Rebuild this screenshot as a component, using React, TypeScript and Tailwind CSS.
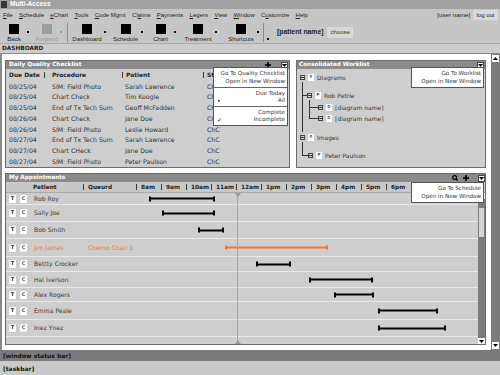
import React from "react";

const dv = "font-['DejaVu_Sans',Verdana,sans-serif]";
const lib = "font-['Liberation_Sans',Arial,sans-serif]";

const menu = [
  ["", "F", "ile"],
  ["", "S", "chedule"],
  ["", "e", "Chart"],
  ["", "T", "ools"],
  ["", "C", "ode Mgmt"],
  ["Cl", "a", "ims"],
  ["", "P", "ayments"],
  ["", "L", "egers"],
  ["", "V", "iew"],
  ["", "W", "indow"],
  ["C", "u", "stomize"],
  ["", "H", "elp"],
];

const checklist = [
  ["08/25/04", "SIM: Field Photo", "Sarah Lawrence"],
  ["08/25/04", "Chart Check", "Tim Koogle"],
  ["08/25/04", "End of Tx Tech Sum", "Geoff McFadden"],
  ["08/26/04", "Chart Check", "Jane Doe"],
  ["08/26/04", "SIM: Field Photo", "Leslie Howard"],
  ["08/27/04", "End of Tx Tech Sum", "Sarah Lawrence"],
  ["08/27/04", "Chart CHeck", "Jane Doe"],
  ["08/27/04", "SIM: Field Photo", "Peter Paulson"],
];

const appts = [
  { name: "Rob Roy", h: "h-[12px]", left: 143, width: 66 },
  { name: "Sally Joe", h: "h-[17px]", left: 156, width: 53 },
  { name: "Bob Smith", h: "h-[17px]", left: 192, width: 26 },
  { name: "Jim James", queued: "Chemo Chair 1", h: "h-[18px]", left: 219, width: 103, active: true },
  { name: "Bettty Crocker", h: "h-[15px]", left: 250, width: 35 },
  { name: "Hal Iverson", h: "h-[16px]", left: 303, width: 64 },
  { name: "Alex Rogers", h: "h-[14px]", left: 328, width: 40 },
  { name: "Emma Peale", h: "h-[18px]", left: 372, width: 60 },
  { name: "Inez Ynez", h: "h-[17px]", left: 372, width: 68 },
];

const hours = ["8am", "9am", "10am", "11am", "12am", "1pm", "2pm", "3pm", "4pm", "5pm", "6pm"];

function Caret({ up = false, className = "" }: { up?: boolean; className?: string }) {
  return (
    <svg width="5" height="3" viewBox="0 0 5 3" className={className}>
      <path d={up ? "M0 3 L2.5 0 L5 3 Z" : "M0 0 L5 0 L2.5 3 Z"} fill="#000" />
    </svg>
  );
}

function MenuButton() {
  return (
    <span className="flex h-[7px] w-[7px] items-center justify-center border border-[#444] bg-white">
      <Caret />
    </span>
  );
}

function Plus() {
  return (
    <svg width="6" height="6" viewBox="0 0 6 6">
      <rect x="2.2" y="0" width="1.6" height="6" fill="#000" />
      <rect x="0" y="2.2" width="6" height="1.6" fill="#000" />
    </svg>
  );
}

function Search() {
  return (
    <svg width="6" height="6" viewBox="0 0 6 6">
      <circle cx="2.6" cy="2.6" r="1.9" stroke="#000" strokeWidth="1.2" fill="none" />
      <path d="M3.8 3.8 L5.7 5.7" stroke="#000" strokeWidth="1.3" />
    </svg>
  );
}

function Pipe() {
  return <span className="h-[6px] w-px shrink-0 bg-[#3a3a3a]" />;
}

function ToolButton({ label, className, gray = false }: { label: string; className: string; gray?: boolean }) {
  return (
    <div className={`relative flex shrink-0 flex-col items-center ${className}`}>
      <span className={`h-[10px] w-[10px] ${gray ? "bg-[#9c9c9c]" : "bg-black"}`} />
      <span className={`mt-[2px] whitespace-nowrap leading-[6px] ${gray ? "text-[#9a9a9a]" : "text-[#222]"}`}>{label}</span>
      <span className={`absolute -right-[4px] top-[7px] h-[2px] w-[2px] ${gray ? "bg-[#9a9a9a]" : "bg-[#111]"}`} />
    </div>
  );
}

function Dropdown({ className, sections }: { className: string; sections: { mark?: string; text: string }[][] }) {
  return (
    <div className={`absolute z-10 border border-[#555] bg-white text-[5.6px] text-[#333] ${className}`}>
      {sections.map((s, i) => (
        <div key={i} className={`${i > 0 ? "border-t border-[#666] pt-[2px]" : "pt-[1px]"} pb-[2px]`}>
          {s.map((it) => (
            <div key={it.text} className={`flex items-center justify-between pl-[3px] pr-[2px] ${i === 0 ? "h-[8px]" : "h-[7px]"}`}>
              {it.mark ? <span className="text-[6px] leading-none text-black">{it.mark}</span> : <span />}
              <span className="whitespace-nowrap">{it.text}</span>
            </div>
          ))}
        </div>
      ))}
    </div>
  );
}

function Expander() {
  return (
    <span className="relative h-[5px] w-[5px] shrink-0 border border-[#444] bg-[#d4d4d4]">
      <span className="absolute left-0 right-0 top-[1px] h-px bg-[#333]" />
    </span>
  );
}

function TreeRow({ tag, text, className }: { tag: string; text: string; className: string }) {
  return (
    <div className={`flex h-[10px] items-center gap-[3px] ${className}`}>
      <Expander />
      <span className="flex h-[7px] w-[6px] items-center justify-center bg-white text-[4px] font-bold text-[#555]">{tag}</span>
      <span className="whitespace-nowrap text-[6px] text-[#333]">{text}</span>
    </div>
  );
}

function Checklist() {
  return (
    <section className="relative flex w-[285px] shrink-0 flex-col border border-[#6c6c6c] bg-[#cecece]">
      <div className="flex h-[8px] shrink-0 items-center bg-[#8b8b8b] pl-[3px]">
        <span className="text-[5.7px] font-bold leading-none text-white">Daily Quality Checklist</span>
        <span className="ml-auto mr-[10px]"><Plus /></span>
        <span className="mr-[1px]"><MenuButton /></span>
      </div>
      <div className="flex h-[12px] shrink-0 items-center text-[5.9px] font-bold text-[#222]">
        <span className="w-[38px] pl-[3px]">Due Date</span>
        <span className="flex w-[78px] items-center gap-[7px]"><Pipe />Procedure</span>
        <span className="flex w-[81px] items-center gap-[3px]"><Pipe />Patient</span>
        <span className="flex items-center gap-[3px]"><Pipe />Status</span>
      </div>
      {checklist.map((r, i) => (
        <div key={i} className="flex h-[10.75px] shrink-0 items-center text-[6.2px] text-[#333]">
          <span className="w-[38px] pl-[3px]">{r[0]}</span>
          <span className="w-[78px] pl-[8px] whitespace-nowrap">{r[1]}</span>
          <span className="w-[81px] pl-[3px] whitespace-nowrap">{r[2]}</span>
          <span className="pl-[4px]">ChC</span>
        </div>
      ))}
      <Dropdown
        className="right-[1px] top-[6px] w-[75px]"
        sections={[
          [{ text: "Go To Quality Checklist" }, { text: "Open in New Window" }],
          [{ text: "Due Today" }, { mark: "•", text: "All" }],
          [{ text: "Complete" }, { mark: "✓", text: "Incomplete" }],
        ]}
      />
    </section>
  );
}

function Worklist() {
  return (
    <section className="relative flex flex-1 flex-col border border-[#6c6c6c] bg-[#cecece]">
      <div className="flex h-[8px] shrink-0 items-center bg-[#8b8b8b] pl-[2px]">
        <span className="text-[5.7px] font-bold leading-none text-white">Consolidated Worklist</span>
        <span className="ml-auto mr-[1px]"><MenuButton /></span>
      </div>
      <div className="relative flex-1 pt-[3px]">
        <span className="absolute left-[5px] top-[13px] h-[50px] w-px bg-[#333]" />
        <span className="absolute left-[5px] top-[26px] h-px w-[5px] bg-[#333]" />
        <span className="absolute left-[12px] top-[31px] h-[18px] w-px bg-[#333]" />
        <span className="absolute left-[12px] top-[38px] h-px w-[9px] bg-[#333]" />
        <span className="absolute left-[12px] top-[49px] h-px w-[9px] bg-[#333]" />
        <span className="absolute left-[5px] top-[73px] h-[13px] w-px bg-[#333]" />
        <span className="absolute left-[5px] top-[86px] h-px w-[6px] bg-[#333]" />
        <TreeRow tag="F" text="Diagrams" className="pl-[3px]" />
        <TreeRow tag="P" text="Rob Petrie" className="mt-[8px] pl-[10px]" />
        <TreeRow tag="D" text="[diagram name]" className="mt-[2px] pl-[21px]" />
        <TreeRow tag="D" text="[diagram name]" className="mt-[1px] pl-[21px]" />
        <TreeRow tag="F" text="Images" className="mt-[9px] pl-[3px]" />
        <TreeRow tag="P" text="Peter Paulson" className="mt-[8px] pl-[11px]" />
      </div>
      <Dropdown
        className="right-[1px] top-[6px] w-[73px]"
        sections={[[{ text: "Go To Worklist" }, { text: "Open in New Window" }]]}
      />
    </section>
  );
}

function Bar({ left, width, active }: { left: number; width: number; active?: boolean }) {
  const c = active ? "bg-[#f0762a]" : "bg-black";
  return (
    <div className="absolute top-1/2 flex h-[5px] -translate-y-1/2 items-center" style={{ left, width }}>
      <span className={`w-[2px] ${active ? "h-[4px]" : "h-[5px]"} ${c}`} />
      <span className={`flex-1 ${active ? "h-[1.5px]" : "h-[2px]"} ${c}`} />
      <span className={`w-[2px] ${active ? "h-[4px]" : "h-[5px]"} ${c}`} />
    </div>
  );
}

function Appointments() {
  return (
    <section className="relative flex h-[172px] flex-col border border-[#6c6c6c] bg-[#cecece]">
      <div className="flex h-[8px] shrink-0 items-center bg-[#8b8b8b] pl-[3px]">
        <span className="text-[5.7px] font-bold leading-none text-white">My Appointments</span>
        <span className="ml-auto mr-[5px]"><Search /></span>
        <span className="mr-[9px]"><Plus /></span>
        <MenuButton />
      </div>
      <div className="flex h-[11px] shrink-0 items-center border-b border-[#a9a9a9] bg-[#c8c8c8] text-[5.8px] font-bold text-[#222]">
        <span className="w-[77px] pl-[27px]">Patient</span>
        <span className="flex w-[53px] items-center gap-[4px]"><Pipe />Queurd</span>
        {hours.map((h) => (
          <span key={h} className="flex w-[25px] shrink-0 items-center gap-[4px]"><Pipe />{h}</span>
        ))}
        <Pipe />
      </div>
      <div className="flex flex-1">
        <div className="relative flex-1">
          {appts.map((a) => (
            <div key={a.name} className={`relative flex items-center border-b border-[#e9e9e9] text-[6.1px] ${a.h} ${a.active ? "text-[#ef7a30]" : "text-[#3a3a3a]"}`}>
              <span className="ml-[3px] flex h-[8px] w-[7px] items-center justify-center rounded-[1px] bg-white text-[5px] font-bold text-[#222]">T</span>
              <span className="ml-[4px] flex h-[8px] w-[7px] items-center justify-center rounded-[1px] bg-white text-[5px] font-bold text-[#666]">C</span>
              <span className="ml-[7px] w-[54px] whitespace-nowrap">{a.name}</span>
              <span className="w-[48px] whitespace-nowrap">{a.queued}</span>
              <Bar left={a.left} width={a.width} active={a.active} />
            </div>
          ))}
          <span className="absolute bottom-0 left-[231px] top-0 w-px bg-[#a8a8a8]" />
          <svg width="6" height="4" viewBox="0 0 6 4" className="absolute left-[228.5px] top-0">
            <path d="M0 0 L6 0 L3 4 Z" fill="#9a9a9a" />
          </svg>
          <svg width="6" height="4" viewBox="0 0 6 4" className="absolute bottom-0 left-[228.5px]">
            <path d="M0 4 L6 4 L3 0 Z" fill="#9a9a9a" />
          </svg>
        </div>
        <div className="flex w-[7px] flex-col bg-[#7b7b7b]">
          <span className="flex h-[6px] items-center justify-center bg-white"><Caret up /></span>
          <span className="mx-[1px] mt-[9px] h-[29px] bg-[#d6d6d6]" />
          <span className="mt-auto flex h-[6px] items-center justify-center bg-white"><Caret /></span>
        </div>
      </div>
      <Dropdown
        className="right-[1px] top-[8px] w-[73px]"
        sections={[[{ text: "Go To Schedule" }, { text: "Open in New Window" }]]}
      />
    </section>
  );
}

export default function App() {
  return (
    <div className={`flex h-[375px] w-[500px] flex-col overflow-hidden bg-[#c6c6c6] ${dv}`}>
      <div className={`flex h-[9px] shrink-0 items-center bg-[#a1a1a1] pl-[1px] ${lib}`}>
        <span className="h-[7px] w-[6px] bg-[#383838]" />
        <span className="ml-[3px] text-[6.6px] font-bold leading-none text-white">Multi-Access</span>
      </div>

      <div className={`flex h-[12px] shrink-0 items-center bg-[#c6c6c6] pl-[3px] pr-[2px] text-[6px] leading-none text-[#222] ${lib}`}>
        <div className="flex gap-[6.25px]">
          {menu.map((m) => (
            <span key={m.join("")} className="whitespace-nowrap">
              {m[0]}
              <span className="underline underline-offset-[1px]">{m[1]}</span>
              {m[2]}
            </span>
          ))}
        </div>
        <span className="ml-auto text-[6.2px]">[user name]</span>
        <span className="ml-[3px] flex h-[10px] items-center bg-[#dadada] px-[3.5px]">log out</span>
      </div>

      <div className={`flex h-[22px] shrink-0 items-start bg-[#c6c6c6] pt-[3px] text-[6px] leading-none ${lib}`}>
        <ToolButton label="Back" className="ml-[3px] w-[22px]" />
        <ToolButton label="Forward" className="ml-[10px] w-[23px]" gray />
        <span className="ml-[9px] mt-[-1px] h-[19px] w-px bg-[#8c8c8c]" />
        <ToolButton label="Dashboard" className="ml-[4px] w-[30px]" />
        <ToolButton label="Schedule" className="ml-[10px] w-[27px]" />
        <ToolButton label="Chart" className="ml-[10px] w-[23px]" />
        <ToolButton label="Treatment" className="ml-[11px] w-[30px]" />
        <ToolButton label="Shortcuts" className="ml-[14px] w-[28px]" />
        <span className="ml-[8px] mt-[-1px] h-[19px] w-px bg-[#8c8c8c]" />
        <span className="ml-[3px] mt-[14px] h-[2px] w-[2px] bg-[#111]" />
        <div className="ml-[8px] flex h-[16px] items-center">
          <span className="text-[6.8px] font-bold text-[#222]">[patient name]</span>
          <span className="ml-[4px] flex h-[11px] items-center bg-[#d8d8d8] px-[3px] text-[#333]">choose</span>
        </div>
      </div>

      <div className="flex h-[11px] shrink-0 items-center border-y border-b-[#8a8a8a] border-t-[#a9a9a9] bg-[#cdcdcd] pl-[2px] text-[5.8px] font-bold text-[#222]">
        DASHBOARD
      </div>

      <div className="flex h-[296px] shrink-0">
        <main className="flex flex-1 flex-col gap-[5px] border-l-2 border-[#8a8a8a] bg-white pl-[3px] pr-[5px] pt-[6px]">
          <div className="flex h-[108px] gap-[6px]">
            <Checklist />
            <Worklist />
          </div>
          <Appointments />
        </main>
        <div className="flex w-[9px] flex-col justify-between bg-[#7b7b7b] px-[1px] py-[1px]">
          <span className="flex h-[7px] items-center justify-center bg-white"><Caret up /></span>
          <span className="flex h-[7px] items-center justify-center bg-white"><Caret /></span>
        </div>
      </div>

      <div className="flex h-[11px] shrink-0 items-center bg-[#7b7b7b] pl-[3px] text-[6px] font-bold text-[#111]">
        [window status bar]
      </div>
      <div className="flex h-[14px] shrink-0 items-center bg-[#cacaca] pl-[3px] text-[6px] font-bold text-[#111]">
        [taskbar]
      </div>
    </div>
  );
}
